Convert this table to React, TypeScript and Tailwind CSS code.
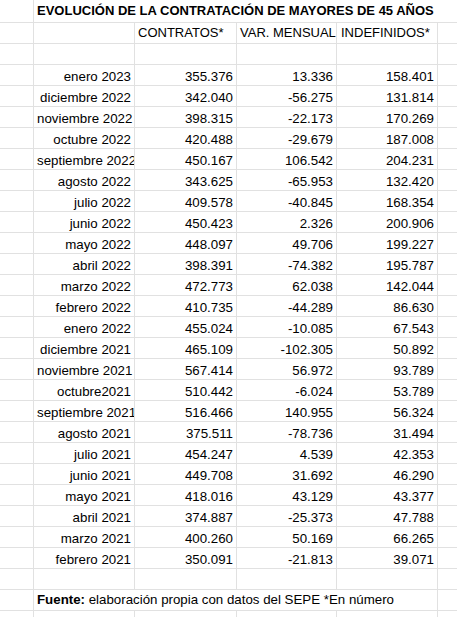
import React from 'react';

// Datos de contratación de mayores de 45 años (SEPE)
const rows: [string, string, string, string][] = [
  ['enero 2023', '355.376', '13.336', '158.401'],
  ['diciembre 2022', '342.040', '-56.275', '131.814'],
  ['noviembre 2022', '398.315', '-22.173', '170.269'],
  ['octubre 2022', '420.488', '-29.679', '187.008'],
  ['septiembre 2022', '450.167', '106.542', '204.231'],
  ['agosto 2022', '343.625', '-65.953', '132.420'],
  ['julio 2022', '409.578', '-40.845', '168.354'],
  ['junio 2022', '450.423', '2.326', '200.906'],
  ['mayo 2022', '448.097', '49.706', '199.227'],
  ['abril 2022', '398.391', '-74.382', '195.787'],
  ['marzo 2022', '472.773', '62.038', '142.044'],
  ['febrero 2022', '410.735', '-44.289', '86.630'],
  ['enero 2022', '455.024', '-10.085', '67.543'],
  ['diciembre 2021', '465.109', '-102.305', '50.892'],
  ['noviembre 2021', '567.414', '56.972', '93.789'],
  ['octubre2021', '510.442', '-6.024', '53.789'],
  ['septiembre 2021', '516.466', '140.955', '56.324'],
  ['agosto 2021', '375.511', '-78.736', '31.494'],
  ['julio 2021', '454.247', '4.539', '42.353'],
  ['junio 2021', '449.708', '31.692', '46.290'],
  ['mayo 2021', '418.016', '43.129', '43.377'],
  ['abril 2021', '374.887', '-25.373', '47.788'],
  ['marzo 2021', '400.260', '50.169', '66.265'],
  ['febrero 2021', '350.091', '-21.813', '39.071'],
];

const line = 'border-[#e1e1e1]';
const widths = ['w-[34px]', 'w-[101px]', 'w-[102px]', 'w-[100px]', 'w-[101px]'];

const EmptyRow = ({ h = 'h-[21px]' }: { h?: string }) => (
  <div className={`flex ${h} border-b ${line}`}>
    {widths.map((w) => (
      <div key={w} className={`${w} shrink-0 border-r ${line}`} />
    ))}
    <div className="flex-1" />
  </div>
);

const DataRow = ({ cells }: { cells: string[] }) => (
  <div className={`flex h-[21px] border-b ${line} text-[13.3px] leading-[17px]`}>
    <div className={`w-[34px] shrink-0 border-r ${line}`} />
    {cells.map((c, i) => (
      <div
        key={i}
        className={`${widths[i + 1]} shrink-0 border-r ${line} flex flex-col justify-end overflow-hidden`}
      >
        <div className="whitespace-nowrap text-right pl-[3px] pr-[3px]">{c}</div>
      </div>
    ))}
    <div className="flex-1" />
  </div>
);

export default function App() {
  return (
    <div
      className="w-[457px] h-[617px] overflow-hidden bg-white text-black"
      style={{ fontFamily: '"Liberation Sans", Arial, sans-serif' }}
    >
      {/* Título */}
      <div className={`flex h-[23px] border-b ${line}`}>
        <div className={`w-[34px] shrink-0 border-r ${line}`} />
        <div className="flex-1 pl-[3px] text-[13px] font-bold leading-[22px] whitespace-nowrap">
          EVOLUCIÓN DE LA CONTRATACIÓN DE MAYORES DE 45 AÑOS
        </div>
      </div>

      {/* Cabecera */}
      <div className={`flex h-[21px] border-b ${line} text-[13px] leading-[20px]`}>
        <div className={`w-[34px] shrink-0 border-r ${line}`} />
        <div className={`w-[101px] shrink-0 border-r ${line}`} />
        <div className={`w-[102px] shrink-0 border-r ${line} pl-[3px] whitespace-nowrap`}>CONTRATOS*</div>
        <div className={`w-[100px] shrink-0 border-r ${line} pl-[3px] whitespace-nowrap`}>VAR. MENSUAL</div>
        <div className={`w-[101px] shrink-0 border-r ${line} pl-[4px] whitespace-nowrap`}>INDEFINIDOS*</div>
        <div className="flex-1" />
      </div>

      <EmptyRow />

      {rows.map((r) => (
        <DataRow key={r[0]} cells={r} />
      ))}

      <EmptyRow />

      {/* Fuente */}
      <div className={`flex h-[21px] border-b ${line} text-[13.3px] leading-[20px]`}>
        <div className={`w-[34px] shrink-0 border-r ${line}`} />
        <div className={`w-[404px] shrink-0 border-r ${line} pl-[3px] whitespace-nowrap`}>
          <span className="font-bold">Fuente:</span> elaboración propia con datos del SEPE *En número
        </div>
        <div className="flex-1" />
      </div>

      <EmptyRow />
    </div>
  );
}
